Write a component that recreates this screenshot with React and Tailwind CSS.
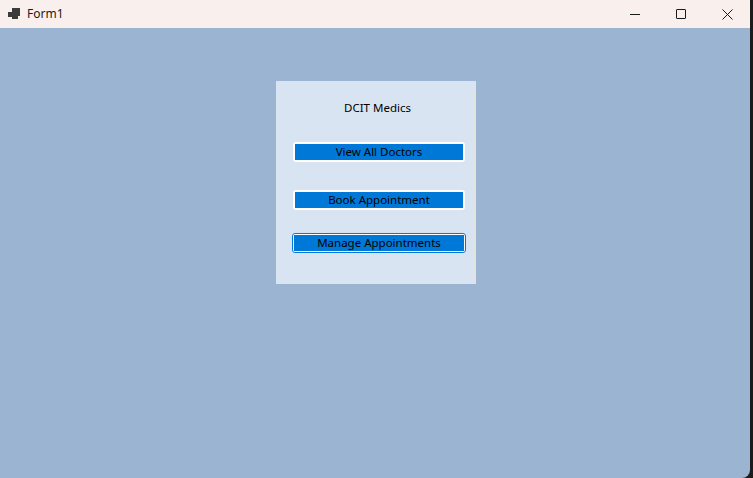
export default function App() {
  return (
    <div className="w-[753px] h-[478px] bg-[#1c1c1c] flex font-['Noto_Sans',sans-serif] text-[12px] text-black overflow-hidden">
      <div className="w-[750px] h-[478px] flex flex-col bg-[#9bb4d1] rounded-br-[8px] overflow-hidden">
        {/* Title bar */}
        <div className="h-[28px] bg-[#f9f0ee] flex items-center shrink-0">
          <svg width="12" height="12" viewBox="0 0 12 12" className="ml-[8px]">
            <rect x="0" y="4" width="5" height="5" fill="#3b3b3b" />
            <rect x="4" y="0" width="8" height="8" fill="#3b3b3b" />
            <rect x="4" y="7" width="6" height="4" fill="#3b3b3b" />
          </svg>
          <span className="ml-[7px] text-[12px] text-[#1a1a1a]">Form1</span>
          <div className="ml-auto flex items-center h-full">
            <div className="w-[46px] h-full flex items-center justify-center">
              <div className="w-[10px] h-px bg-[#1a1a1a]" />
            </div>
            <div className="w-[46px] h-full flex items-center justify-center">
              <div className="w-[10px] h-[10px] border border-[#1a1a1a] rounded-[1px]" />
            </div>
            <div className="w-[46px] h-full flex items-center justify-center">
              <svg width="11" height="11" viewBox="0 0 11 11">
                <path d="M0.5 0.5 L10.5 10.5 M10.5 0.5 L0.5 10.5" stroke="#1a1a1a" strokeWidth="1" />
              </svg>
            </div>
          </div>
        </div>

        {/* Client area */}
        <div className="flex-1 pt-[53px] pl-[276px]">
          <div className="w-[200px] h-[203px] bg-[#d8e4f1] pt-[8px] px-[1px] pb-[2px]">
            <div className="h-full border border-[#e3e3e0] flex flex-col">
              <div className="mt-[10px] ml-[3px] text-center text-[11.5px] leading-[16px]">DCIT Medics</div>
              <div className="mt-[26px] ml-[15px] flex flex-col gap-[28px]">
                <button className="w-[172px] h-[20px] bg-white rounded-[3px] p-[2px] flex">
                  <span className="flex-1 bg-[#0078d7] text-[11.5px] leading-[16px] text-black">View All Doctors</span>
                </button>
                <button className="w-[172px] h-[20px] bg-white rounded-[3px] p-[2px] flex">
                  <span className="flex-1 bg-[#0078d7] text-[11.5px] leading-[16px] text-black">Book Appointment</span>
                </button>
              </div>
              <button className="mt-[23px] ml-[14px] w-[174px] h-[20px] bg-white rounded-[3px] border border-[#0078d7] p-[1px] flex">
                <span className="flex-1 bg-[#0078d7] text-[11.5px] leading-[16px] text-black">Manage Appointments</span>
              </button>
            </div>
          </div>
        </div>
      </div>
    </div>
  );
}
